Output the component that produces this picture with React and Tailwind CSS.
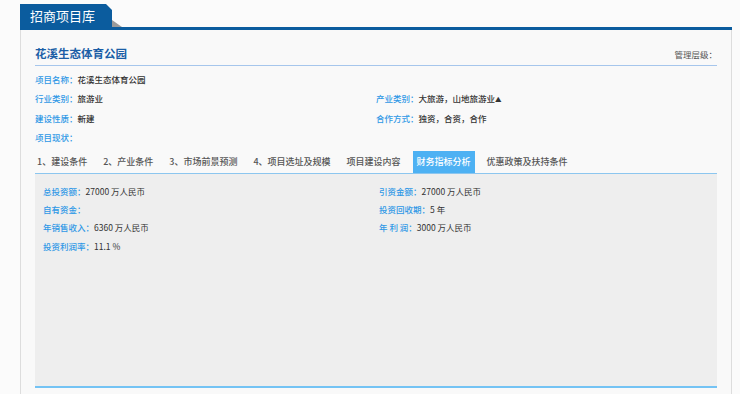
import React from "react";

const font = { fontFamily: '"Noto Sans CJK SC", "Noto Sans", sans-serif' };

function Field({ label, value }) {
  return (
    <div className="flex items-center h-[19.5px] text-[8.5px] leading-none">
      <span className="text-[#2f98e6] font-medium">{label}：</span>
      <span className="text-[#333] font-medium">{value}</span>
    </div>
  );
}

function Metric({ label, value }) {
  return (
    <div className="flex items-center h-[18.3px] text-[8.5px] leading-none">
      <span className="text-[#2f98e6] font-medium">{label}：</span>
      <span className="text-[#333]">{value}</span>
    </div>
  );
}

const tabs = [
  "1、建设条件",
  "2、产业条件",
  "3、市场前景预测",
  "4、项目选址及规模",
  "项目建设内容",
  "财务指标分析",
  "优惠政策及扶持条件",
];

export default function App() {
  return (
    <div className="w-[740px] h-[394px] overflow-hidden bg-[#fbfbfb]" style={font}>
      {/* header tab */}
      <div className="pl-[20px] pt-[4px]">
        <div className="flex items-end">
          <div className="w-[92px] h-[23px] bg-[#0b5c9e] text-white text-[13px] leading-[23px] pl-[10px] [clip-path:polygon(0_0,calc(100%-6px)_0,100%_6px,100%_100%,0_100%)]">
            招商项目库
          </div>
          <div className="w-0 h-0 border-l-[10px] border-l-[#9a9a9a] border-t-[7px] border-t-transparent" />
        </div>
        <div className="w-[712px] h-[3px] bg-[#0b5c9e]" />
      </div>

      {/* panel */}
      <div className="ml-[20px] w-[712px] h-[370px] border-l border-r border-[#dddddd] bg-[#f9f9f9] px-[14px] pt-[14px]">
        <div className="flex items-center justify-between h-[20px]">
          <span className="text-[11.5px] font-bold text-[#1b5ea6]">花溪生态体育公园</span>
          <span className="text-[8.5px] text-[#555]">管理层级：</span>
        </div>
        <div className="mt-[1px] h-px bg-[#a6c6ec]" />

        <div className="grid grid-cols-2 pt-[3px]">
          <Field label="项目名称" value="花溪生态体育公园" />
          <div />
          <Field label="行业类别" value="旅游业" />
          <Field
            label="产业类别"
            value={
              <>
                大旅游，山地旅游业<span className="text-[6.5px]">▲</span>
              </>
            }
          />
          <Field label="建设性质" value="新建" />
          <Field label="合作方式" value="独资，合资，合作" />
          <Field label="项目现状" value="" />
        </div>

        {/* tabs */}
        <div className="mt-[4px] flex items-end h-[22px] ml-[-2px] gap-[8px] text-[9px] font-medium">
          {tabs.map((t) => (
            <div
              key={t}
              className={
                t === "财务指标分析"
                  ? "h-[22px] px-[4px] flex items-center bg-[#4db1f3] text-white"
                  : "h-[22px] px-[4px] flex items-center text-[#555]"
              }
            >
              {t}
            </div>
          ))}
        </div>
        <div className="h-px bg-[#8cc6ef]" />

        <div className="h-[214px] bg-[#eeeeee] border-b-2 border-[#74c3f4] pl-[8px] pr-[2px] pt-[8px]">
          <div className="grid grid-cols-2">
            <Metric label="总投资额" value="27000 万人民币" />
            <Metric label="引资金额" value="27000 万人民币" />
            <Metric label="自有资金" value="" />
            <Metric label="投资回收期" value="5 年" />
            <Metric label="年销售收入" value="6360 万人民币" />
            <Metric label="年 利 润" value="3000 万人民币" />
            <Metric label="投资利润率" value="11.1 %" />
          </div>
        </div>
      </div>
    </div>
  );
}
